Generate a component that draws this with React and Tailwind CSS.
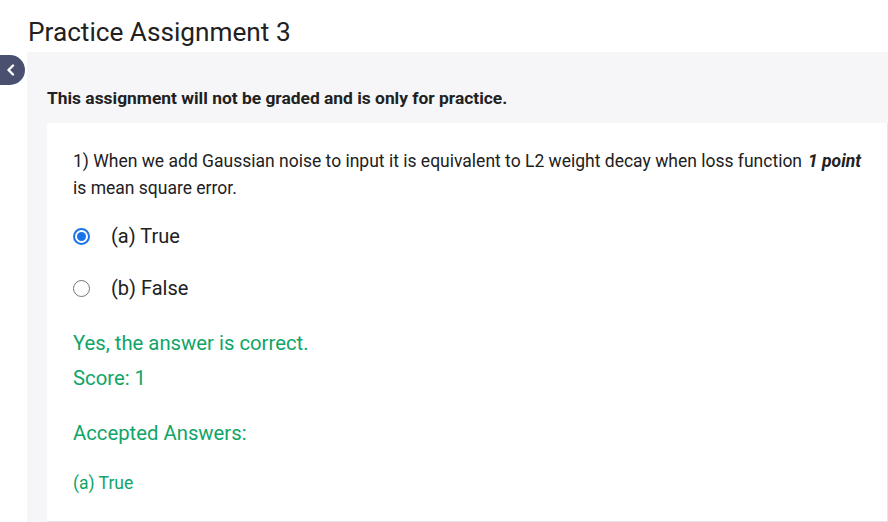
export default function App() {
  return (
    <div className="w-[888px] h-[522px] overflow-hidden bg-white text-[#212121]" style={{ fontFamily: 'Roboto, "Noto Sans", sans-serif' }}>
      <h1 className="pl-[28px] pt-[15px] h-[52px] text-[26.2px] leading-[34px] font-normal">Practice Assignment 3</h1>
      <div className="relative ml-[27px] bg-[#f6f6f8] h-[470px] pl-[20px]">
        <div className="absolute left-[-27px] top-[3px] w-[25px] h-[30px] rounded-r-full bg-[#4a5170] flex items-center justify-center">
          <svg width="10" height="12" viewBox="0 0 10 12" className="ml-[-4px]">
            <path d="M7 1.5 L2.5 6 L7 10.5" stroke="white" strokeWidth="2.4" fill="none" strokeLinecap="round" strokeLinejoin="round" />
          </svg>
        </div>
        <div className="pt-[35px] h-[71px] text-[17.4px] font-bold leading-[22px]">This assignment will not be graded and is only for practice.</div>
        <div className="bg-white border-r border-b border-[#e4e4e8] h-[399px] pl-[26px] pr-[22px] pt-[25px]">
          <div className="flex text-[17.5px] leading-[27px]">
            <p className="w-[734px] shrink-0">1) When we add Gaussian noise to input it is equivalent to L2 weight decay when loss function is mean square error.</p>
            <span className="font-bold italic ml-[1px] whitespace-nowrap">1 point</span>
          </div>
          <div className="mt-[21px] flex flex-col gap-[26px] text-[20px] leading-[26px]">
            <div className="flex items-center">
              <span className="w-[17px] h-[17px] rounded-full border-2 border-[#1a73e8] flex items-center justify-center">
                <span className="w-[9px] h-[9px] rounded-full bg-[#1a73e8]"></span>
              </span>
              <span className="ml-[21px]">(a) True</span>
            </div>
            <div className="flex items-center">
              <span className="w-[17px] h-[17px] rounded-full border border-[#767676]"></span>
              <span className="ml-[21px]">(b) False</span>
            </div>
          </div>
          <div className="text-[#10a567] mt-[29px]">
            <div className="text-[20.3px] leading-[26px]">Yes, the answer is correct.</div>
            <div className="text-[20.3px] leading-[26px] mt-[9px]">Score: 1</div>
            <div className="text-[20.3px] leading-[26px] mt-[29px]">Accepted Answers:</div>
            <div className="text-[17.5px] leading-[24px] mt-[25px]">(a) True</div>
          </div>
        </div>
      </div>
    </div>
  );
}
